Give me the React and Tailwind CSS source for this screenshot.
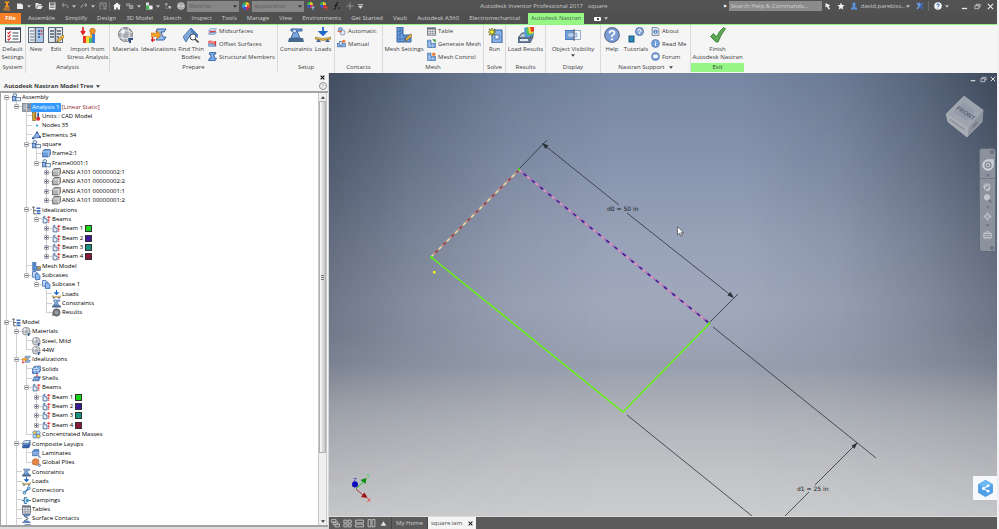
import React from 'react';

/* ---------- icon set ---------- */

const BLUE = '#3f6fb5';
const PALE = '#9cc0ea';

const SHAPES = {
  settings: (
    <>
      <rect x="0.5" y="1" width="15" height="14" fill="#fff" stroke="#3b4757" />
      <rect x="0" y="0.5" width="16" height="2.5" fill="#3b4757" />
      <path d="M7.5 6h6M7.5 9h6M7.5 12h6" stroke="#3b4757" strokeWidth="1.2" />
      <path d="M2.5 5.5l1.2 1.2 2-2.4M2.5 8.7l1.2 1.2 2-2.4M2.5 11.9l1.2 1.2 2-2.4" stroke="#d8262c" strokeWidth="1.1" fill="none" />
    </>
  ),
  newDoc: (
    <>
      <rect x="0.5" y="0.5" width="15" height="15" fill="#e8edf3" stroke="#5b6878" />
      <rect x="9" y="1" width="6" height="14" fill="#a9c6e8" />
      <path d="M7.5 1v14" stroke="#5b6878" strokeWidth="1.6" />
      <path d="M2 4h4M2 7h4M2 10h4M2 13h4" stroke="#6f7b8a" />
      <path d="M10 4h2M10 7h2M10 10h2" stroke="#1f4f97" strokeWidth="1.4" />
      <path d="M12.5 4h2M12.5 7h2" stroke="#d64040" strokeWidth="1.4" />
    </>
  ),
  editDoc: (
    <>
      <rect x="0.5" y="0.5" width="14" height="15" fill="#e3e7ec" stroke="#5b6878" />
      <path d="M7.5 1v14" stroke="#5b6878" strokeWidth="1.6" />
      <path d="M2 4h4M2 7h4M2 10h4M9 4h4M9 7h4M9 10h2" stroke="#56616f" strokeWidth="1.3" />
      <path d="M9 15l1-3 5-4 1.5 1.8-5 4.2z" fill="#f0b73a" stroke="#7a5715" strokeWidth="0.6" />
    </>
  ),
  stress: (
    <>
      <path d="M3 0v6M1 4l2 3 2-3" stroke="#e01f1f" strokeWidth="1.6" fill="none" />
      <path d="M3 9h7V6h5v10H3z" fill="#f7b52c" />
      <path d="M3 9h3v7H3z" fill="#e63a24" />
      <path d="M6 10h3v6H6z" fill="#f3dc3b" />
      <path d="M9 11h3v5H9z" fill="#48b761" />
      <path d="M12 7h3v9h-3z" fill="#3f7fd0" />
      <circle cx="12.5" cy="4" r="2.7" fill="#f59a23" stroke="#b4641a" strokeWidth="0.8" />
    </>
  ),
  sphere: (
    <>
      <circle cx="7.5" cy="7.5" r="7" fill="#a9adb3" stroke="#5d6168" strokeWidth="0.8" />
      <path d="M1 6c4-3 9-3 13 0M1 10c4 2 9 2 13 0M5 1c-2 4-1 9 1 13M10 1c2 4 2 9-1 13" stroke="#e9ebee" strokeWidth="1" fill="none" />
      <circle cx="5" cy="4.5" r="2.2" fill="#eef0f2" />
      <path d="M10 11h5v2h-2v3h-2z" fill="#31527f" />
    </>
  ),
  ideal: (
    <>
      <path d="M6 2h9l-2 3h-3l2 5h3l-2 3H5l2-3h2L7 5H5z" fill={PALE} stroke="#28569c" strokeWidth="0.9" />
      <path d="M0 6h6V3.5L10 8l-4 4V9.5H0z" fill="#f4a028" stroke="#c26a12" strokeWidth="0.5" />
      <path d="M1.5 10v5M0 13h4" stroke="#d8262c" strokeWidth="1.4" />
    </>
  ),
  thin: (
    <>
      <path d="M0 10l8-9 7 7-3 3-4-4-5 8z" fill="#7ea8dc" stroke="#3564a3" strokeWidth="0.8" />
      <path d="M8 1l7 7v3L8 5z" fill="#4b7fc2" />
      <circle cx="10" cy="10" r="3" fill="#fff" stroke="#4a4f57" strokeWidth="1" />
      <path d="M12 12l3.5 3.5" stroke="#4a4f57" strokeWidth="1.6" />
    </>
  ),
  midsurf: (
    <>
      <path d="M4 3h11l-3 4H1z" fill="#e7edf6" stroke="#5b86c4" strokeWidth="1.2" />
      <path d="M3 7h12l-3 3H1z" fill="#e5443c" />
      <path d="M3 10h12l-3 3H1z" fill="#b9d1ef" stroke="#5b86c4" strokeWidth="1.2" />
    </>
  ),
  offset: (
    <>
      <path d="M1 4q3-2 6 0t7 0v4q-4 2-7 0T1 8z" fill="#f08a86" stroke="#d33" strokeWidth="0.9" />
      <path d="M1 9q3-2 6 0t7 0v4H1z" fill="#8fb5e6" stroke="#3c6cb0" strokeWidth="0.9" />
      <path d="M13 4v8" stroke="#d8262c" strokeWidth="1.8" />
    </>
  ),
  beamI: (
    <path d="M3 1h11l-1 3h-3l2 7h3l-2 4H1l2-4h3L4 4H2z" fill="#7fb0ea" stroke="#1f4e96" strokeWidth="1.4" />
  ),
  constraint: (
    <>
      <path d="M3 2h11v2H9l3 7H3l3-7H3z" fill="#7ea8dc" stroke="#2c5a9c" strokeWidth="0.9" />
      <path d="M1 11h14l1 4H0z" fill="#47698f" />
      <circle cx="6.5" cy="4" r="2" fill="#cfe0f5" stroke="#2c5a9c" strokeWidth="0.8" />
    </>
  ),
  load: (
    <>
      <path d="M8 0v7M5 5l3 3 3-3z" fill="#1e66c9" stroke="#1e66c9" strokeWidth="1.8" />
      <path d="M0 10q8 3 16 0v2q-8 3-16 0z" fill="#e8b13a" stroke="#7b6327" strokeWidth="0.5" />
      <path d="M1 15l2.5-3L6 15zM10 15l2.5-3L15 15z" fill="#3d5f92" />
    </>
  ),
  auto: (
    <>
      <circle cx="6" cy="5" r="4" fill="#8fb5e6" stroke="#3c6cb0" />
      <circle cx="10" cy="10" r="4.5" fill="#dfe7f2" stroke="#4b6a98" />
      <path d="M1 8h7M5 6l3 2-3 2" stroke="#e0662a" strokeWidth="1.6" fill="none" />
    </>
  ),
  manual: (
    <>
      <rect x="1" y="8" width="14" height="6" fill="#8fb5e6" stroke="#2c5a9c" />
      <rect x="4" y="4" width="5" height="7" fill="#dfe7f2" stroke="#2c5a9c" />
      <circle cx="12" cy="4" r="2.8" fill="#f27a2b" />
    </>
  ),
  meshSet: (
    <>
      <path d="M1 0h6v8h8v7H1z" fill="#6d9fdc" stroke="#2c5a9c" strokeWidth="0.9" />
      <path d="M1 5l6-2M1 9l6-4M4 0v15M1 12h14M7 8l4 7M11 8l-4 7" stroke="#2c5a9c" strokeWidth="0.6" />
      <path d="M9 14l1-3 5-4 1.5 1.8-5 4z" fill="#f0b73a" stroke="#7a5715" strokeWidth="0.6" />
    </>
  ),
  meshGen: (
    <>
      <path d="M1 2h6v6h8v7H1z" fill="#6d9fdc" stroke="#24508f" />
      <path d="M4 2v13M1 8h6M1 12h14M10 8v7" stroke="#dbe9fa" strokeWidth="0.8" />
      <path d="M10 1h5v5z" fill="#3aa648" stroke="#3aa648" />
    </>
  ),
  meshCtl: (
    <>
      <path d="M1 2h6v6h8v7H1z" fill="#6d9fdc" stroke="#24508f" />
      <path d="M4 2v13M1 8h6M1 12h14M10 8v7" stroke="#dbe9fa" strokeWidth="0.8" />
      <circle cx="12" cy="4" r="3" fill="#f27a2b" />
    </>
  ),
  table: (
    <>
      <rect x="1" y="1.5" width="14" height="13" fill="#f3f4f6" stroke="#5b6068" strokeWidth="1.4" />
      <rect x="1" y="1.5" width="14" height="3" fill="#6c727c" />
      <path d="M5.5 2v12M10.5 2v12M1 8h14M1 11.3h14" stroke="#70767f" />
    </>
  ),
  run: (
    <>
      <path d="M8 3h7v13H5V8z" fill="#8ab2e6" stroke="#2c5a9c" />
      <rect x="8" y="8" width="4" height="4" fill="#e7f0fb" stroke="#2c5a9c" strokeWidth="0.7" />
      <path d="M5 1v8M1 5h8M2 2l6 6M8 2L2 8" stroke="#6f6f12" strokeWidth="1.2" />
      <circle cx="5" cy="5" r="1.8" fill="#f2ee3a" />
    </>
  ),
  results: (
    <>
      <path d="M0 11l4-5h11l-3 5z" fill="#b8c4d4" stroke="#3b4c63" />
      <path d="M0 11h12l3-5v4l-3 6H0z" fill="#6a7f9c" stroke="#3b4c63" strokeWidth="0.8" />
      <path d="M2 12h8v2H2z" fill="#e4eaf2" />
      <path d="M6 1q5-2 10 0v6q-4 4-9 3z" fill="#4c9be0" />
      <path d="M8 1q4-2 8 0v5q-3 3-7 2z" fill="#58c05b" />
      <path d="M10 0q3-1 6 0v5q-2 3-5 1z" fill="#f4d13a" />
      <path d="M12 0h4v4q-2 2-3 0z" fill="#e63a24" />
    </>
  ),
  visibility: (
    <>
      <rect x="0" y="3.5" width="9" height="9" fill="#6f9fdb" stroke="#3b68a8" strokeWidth="0.8" />
      <rect x="9" y="3.5" width="6.5" height="9" fill="#f7f9fc" stroke="#7a96bd" strokeWidth="0.8" />
      <rect x="3" y="6" width="9" height="4" fill="#b9d1ef" stroke="#7a96bd" strokeWidth="0.6" />
      <path d="M9 2v12" stroke="#5b6068" strokeWidth="1" />
    </>
  ),
  help: (
    <>
      <circle cx="8" cy="8" r="7.3" fill="#7d9fd6" stroke="#5a6f92" strokeWidth="1.2" />
      <path d="M5.5 6.2q0-2.5 2.500-2.500t2.500 2.300q0 1.500-2.500 2.500v1.500" stroke="#fff" strokeWidth="1.6" fill="none" />
      <circle cx="8" cy="12.2" r="1" fill="#fff" />
    </>
  ),
  tutorials: (
    <>
      <circle cx="11.5" cy="4.5" r="4" fill="#8fabda" stroke="#5773a4" />
      <path d="M10 3.8q0-1.500 1.500-1.500t1.500 1.500q0 .8-1.500 1.400v1.300" stroke="#fff" fill="none" />
      <rect x="1" y="9" width="5" height="6" fill="#2b87b8" stroke="#195f85" />
    </>
  ),
  about: (
    <>
      <path d="M2 1h9l3 3v11H2z" fill="#e6ebf2" stroke="#56657c" strokeWidth="1.3" />
      <circle cx="8" cy="8.5" r="4" fill="#5f87c6" />
      <path d="M8 8v3M8 6v1" stroke="#fff" strokeWidth="1.4" />
    </>
  ),
  info: (
    <>
      <circle cx="8" cy="8" r="7" fill="#7aa2dc" stroke="#4f6fa5" strokeWidth="1.2" />
      <path d="M8 7v5M8 4v1.6" stroke="#fff" strokeWidth="1.8" />
    </>
  ),
  forum: (
    <>
      <circle cx="8" cy="8" r="7" fill="#7aa2dc" stroke="#4f6fa5" strokeWidth="1.2" />
      <path d="M4 5h8v5H8l-2 2v-2H4z" fill="#fff" />
    </>
  ),
  check: (
    <path d="M0.5 9.5L3.5 6.500l3 3.500Q9 4 13.500 0.500l2 1.200Q10.500 8 8 15H6z" fill="#5cab50" stroke="#2f6e2b" strokeWidth="0.8" />
  ),
  assembly: (
    <>
      <path d="M2 6V2q3-2 6 0v4" fill="#dfe9f5" stroke="#30568c" strokeWidth="1.2" />
      <rect x="1" y="6" width="6" height="8" fill="#8db4e6" stroke="#30568c" strokeWidth="1.2" />
      <rect x="7" y="8" width="8" height="6" fill="#eef3f9" stroke="#30568c" strokeWidth="1.2" />
    </>
  ),
  analysis: (
    <>
      <rect x="1" y="1" width="14" height="14" fill="#9aa1ab" stroke="#5d6470" />
      <path d="M8 1v14M3 4h3M3 7h3M3 10h3" stroke="#dfe3e8" strokeWidth="1.3" />
      <path d="M10 4h4M10 8h4" stroke="#2e5fa8" strokeWidth="2" />
    </>
  ),
  units: (
    <>
      <rect x="1" y="1" width="6" height="14" fill="#d9a93a" stroke="#6b5218" />
      <path d="M4 4h3M4 7h3M4 10h3" stroke="#4f3b0d" />
      <path d="M11 1v9" stroke="#1c4fa0" strokeWidth="3" />
      <circle cx="11" cy="12" r="3.5" fill="#d8262c" />
    </>
  ),
  node: <circle cx="9" cy="8" r="2" fill="#2f9be8" />,
  elements: (
    <>
      <path d="M1 13L9 2l6 9z" fill="#8fb5e6" stroke="#2c5a9c" strokeWidth="1.3" />
      <circle cx="9" cy="3" r="2" fill="#2c5a9c" /><circle cx="2" cy="13" r="2" fill="#2c5a9c" /><circle cx="14" cy="11" r="2" fill="#2c5a9c" />
    </>
  ),
  partBlue: (
    <>
      <path d="M1 5l3-4h11v9l-3 4H1z" fill="#6f9fdb" stroke="#234f90" strokeWidth="1.2" />
      <path d="M1 5h11v9M12 5l3-4" stroke="#dce9f8" strokeWidth="1.2" fill="none" />
    </>
  ),
  partGray: (
    <>
      <path d="M1 5l3-4h11v9l-3 4H1z" fill="#b4b4b4" stroke="#555" strokeWidth="1.4" />
      <path d="M1 5h11v9M12 5l3-4" stroke="#f0f0f0" strokeWidth="1.2" fill="none" />
    </>
  ),
  treeList: (
    <>
      <path d="M0 2h5M3 2v12h4M3 8h4" stroke="#444" strokeWidth="1.4" fill="none" />
      <path d="M8 4h7M8 8.5h7M8 13h7" stroke={BLUE} strokeWidth="3" />
    </>
  ),
  beam: (
    <>
      <path d="M2 14V6q0-4 3-4v5h4v7z" fill="#eef3f9" stroke="#3a5f94" strokeWidth="1.5" />
      <path d="M12 2v12" stroke="#d8262c" strokeWidth="2" strokeDasharray="4 1.5" />
      <path d="M9 4h6" stroke="#d8262c" strokeWidth="1.5" />
    </>
  ),
  subcase: (
    <>
      <path d="M1 1h6l3 3v7H1z" fill="#cfe0f5" stroke="#2c62b0" strokeWidth="1.4" />
      <path d="M6 5h5l3 3v7H6z" fill="#8fb8ee" stroke="#2c62b0" strokeWidth="1.4" />
    </>
  ),
  blob: (
    <>
      <circle cx="8" cy="8" r="6.5" fill="#777b80" stroke="#4a4d51" />
      <circle cx="8" cy="8" r="3" fill="#9da1a6" />
      <path d="M1 15V8l3 3z" fill="#4a4d51" />
    </>
  ),
  solids: (
    <>
      <path d="M1 6l4-4h10v8l-4 5H1z" fill="#5e93da" stroke="#1c458a" strokeWidth="1.2" />
      <path d="M1 10h10M5 6v9M11 6v9M1 6h10l4-4M8 2v4M11 10l4-4" stroke="#fff" strokeWidth="1" fill="none" />
    </>
  ),
  shells: (
    <>
      <path d="M1 12l3-7h11l-3 7z" fill="#3f72bd" stroke="#1c458a" />
      <path d="M6 5l-2 7M10 5l-2 7M2.5 8.5h11" stroke="#c9dcf5" />
      <path d="M9 0v5" stroke="#d8262c" strokeWidth="1.8" />
    </>
  ),
  masses: (
    <>
      <circle cx="5" cy="5" r="3.6" fill="#f6d24c" stroke="#3f6fb5" strokeWidth="1.2" />
      <circle cx="11" cy="5" r="3.6" fill="#bcd5f2" stroke="#3f6fb5" strokeWidth="1.2" />
      <circle cx="5" cy="11" r="3.6" fill="#bcd5f2" stroke="#3f6fb5" strokeWidth="1.2" />
      <circle cx="11" cy="11" r="3.6" fill="#f6d24c" stroke="#3f6fb5" strokeWidth="1.2" />
    </>
  ),
  layup: (
    <>
      <path d="M1 11l4-4h10l-3 7H1z" fill="#3a6ab0" stroke="#1d4179" />
      <path d="M1 8l4-4h10l-3 5H1z" fill="#7aa8e0" stroke="#1d4179" />
      <path d="M1 5l4-4h10l-3 5H1z" fill="#dce9f8" stroke="#1d4179" />
    </>
  ),
  laminate: (
    <>
      <path d="M1 4l3-3h8v8l-3 3H1z" fill="#5e93da" stroke="#1c458a" />
      <path d="M1 6.5h11M1 9h10" stroke="#dce9f8" />
      <path d="M12 10v4.5h3.5" stroke="#1c458a" strokeWidth="1.3" fill="none" />
    </>
  ),
  plies: (
    <>
      <path d="M1 4l4-3 7 2v7l-4 3-7-2z" fill="#e98449" stroke="#a34e1c" />
      <circle cx="13" cy="13" r="2" fill="#fff" stroke="#1c458a" strokeWidth="1.3" />
    </>
  ),
  connector: (
    <>
      <path d="M4 12l8-8" stroke="#2c6fae" strokeWidth="2.4" />
      <circle cx="4" cy="12" r="2.6" fill="#9fd0ee" stroke="#1f5a94" />
      <circle cx="12" cy="4" r="2.6" fill="#9fd0ee" stroke="#1f5a94" />
    </>
  ),
  damping: (
    <>
      <path d="M0 8h4M12 8h4" stroke="#1f5a94" strokeWidth="1.6" />
      <path d="M9 3H4v10h5" fill="#d5e7f5" stroke="#1f5a94" strokeWidth="1.6" />
      <rect x="7" y="5" width="5" height="6" fill="#3fa0c4" />
    </>
  ),
  contact: (
    <>
      <path d="M1 1h14q-7 6-14 0z" fill="#5e93da" stroke="#1c458a" />
      <path d="M4 4l7 4-7 4" fill="none" stroke="#3b4757" strokeWidth="1.6" />
      <path d="M1 15h14q-7-6-14 0z" fill="#5e93da" stroke="#1c458a" />
    </>
  ),
  page: <path d="M2 3h8l4 3v8H2z" fill="#e9e9e9" />,
  folder: (
    <>
      <path d="M1 2h5l2 2h5v3H5l-3 6H1z" fill="#e4e4e4" />
      <path d="M6 8h10l-4 6H3z" fill="#e4e4e4" />
    </>
  ),
  save: (
    <>
      <rect x="2" y="1" width="13" height="14" fill="#e9e9e9" />
      <rect x="4" y="2" width="9" height="5" fill="#777" /><rect x="4" y="9" width="9" height="3" fill="#8a8a8a" />
    </>
  ),
  undo: <path d="M6 2L2 6l4 4M2 6h7q5 0 5 6" fill="none" stroke="#9a9a9a" strokeWidth="2" />,
  redo: <path d="M10 2l4 4-4 4M14 6H7q-5 0-5 6" fill="none" stroke="#9a9a9a" strokeWidth="2" />,
  pick: <path d="M2 2h12v12H9M2 2v12h3M5 6h5v8" fill="none" stroke="#a5a5a5" strokeWidth="1.6" />,
  home: <path d="M8 1l8 7h-2v7H9.500v-4h-3v4H2V8H0z" fill="#f4f4f4" />,
  cubes: (
    <>
      <path d="M1 3h7v5H1z" fill="#777" stroke="#aaa" /><path d="M7 7h7v6H7z" fill="#8a8a8a" stroke="#c4c4c4" />
    </>
  ),
  green: (
    <>
      <path d="M2 1h6v6h7v8H2z" fill="#d8dde2" />
      <rect x="2" y="7" width="6" height="8" fill="#46b34e" /><circle cx="12" cy="11" r="3" fill="#f0f0f0" />
    </>
  ),
  dots: (
    <>
      <rect x="2" y="2" width="5" height="5" fill="#999" /><rect x="9" y="8" width="5" height="5" fill="#bdbdbd" /><path d="M4 9v4h3" stroke="#aaa" fill="none" />
    </>
  ),
  gsphere: (
    <>
      <circle cx="8" cy="8" r="7.5" fill="#c9c9c9" /><path d="M2 5q6-3 12 0M2 11q6 3 12 0M8 1v14" stroke="#777" fill="none" />
    </>
  ),
  wheel: (
    <>
      <path d="M8 8L8 0A8 8 0 0 1 15 4z" fill="#e9c92b" /><path d="M8 8l7-4A8 8 0 0 1 15 12z" fill="#e8502a" />
      <path d="M8 8l7 4A8 8 0 0 1 8 16z" fill="#c92a5b" /><path d="M8 8v8A8 8 0 0 1 1 12z" fill="#3a4fd0" />
      <path d="M8 8l-7 4A8 8 0 0 1 1 4z" fill="#2f9be8" /><path d="M8 8L1 4A8 8 0 0 1 8 0z" fill="#3fb54a" />
      <circle cx="8" cy="8" r="2" fill="#f5f5f5" />
    </>
  ),
  wheelUp: (
    <>
      <circle cx="6" cy="6" r="6" fill="#3fb54a" /><path d="M6 6V0a6 6 0 0 1 6 6z" fill="#e9c92b" /><path d="M6 6h6a6 6 0 0 1-6 6z" fill="#c92a5b" />
      <path d="M6 6v6a6 6 0 0 1-6-6z" fill="#3a4fd0" /><path d="M12 16V9M9 12l3-3 3 3" stroke="#9cc4f5" strokeWidth="2" />
    </>
  ),
  wheelOff: (
    <>
      <circle cx="6" cy="6" r="6" fill="#3fb54a" /><path d="M6 6V0a6 6 0 0 1 6 6z" fill="#e9c92b" /><path d="M6 6h6a6 6 0 0 1-6 6z" fill="#c92a5b" />
      <path d="M6 6v6a6 6 0 0 1-6-6z" fill="#3a4fd0" /><path d="M9 9l6 6M15 9l-6 6" stroke="#f03a2a" strokeWidth="2.4" />
    </>
  ),
  fx: <path d="M11 1q-4-1-5 5l-1 7q-1 2-4 1M3 7h6M11 13l2-2M11 11l2 2" fill="none" stroke="#151515" strokeWidth="2" />,
  plus: <path d="M8 1v14M1 8h14" stroke="#8e8e8e" strokeWidth="2.4" />,
  menu: <path d="M2 2h12v2H2zM2 6h12l-6 7z" fill="#d8d8d8" />,
  dish: <path d="M3 2l10 5-4 1 3 6-3 1-3-6-3 2z" fill="#f2f2f2" />,
  star: <path d="M8 1l2.2 4.8 5 .5-3.800 3.500 1.200 5.200L8 12.300 3.400 15l1.200-5.200L.8 6.300l5-.5z" fill="#f2f2f2" />,
  user: <path d="M8 1a3.5 3.5 0 0 1 2 6.300V10l4 1.500V15H2v-3.500L6 10V7.300A3.500 3.500 0 0 1 8 1z" fill="#5b8fe0" />,
  exchange: (
    <>
      <path d="M2 2l5 6-5 6M6 2l3 4" fill="none" stroke="#6ea2ee" strokeWidth="2.6" /><path d="M14 2L9 8l5 6" fill="none" stroke="#3a6fd8" strokeWidth="2.6" />
    </>
  ),
  qmark: (
    <>
      <circle cx="8" cy="8" r="7.5" fill="#f4f6fa" /><path d="M5.5 6q0-2.300 2.500-2.300T10.500 6q0 1.300-2.500 2.300V10M8 11.500v1.600" fill="none" stroke="#2c5aa8" strokeWidth="1.9" />
    </>
  ),
  min: <path d="M2 11h12v3H2z" fill="#e8e8e8" />,
  restore: <path d="M5 6V3h9v6h-3M2 6h9v7H2z" fill="none" stroke="#e8e8e8" strokeWidth="1.5" />,
  close: <path d="M2 2l12 12M14 2L2 14" stroke="#ededed" strokeWidth="2.4" />,
  cascade: <path d="M1 1h8v5H1zM4 5h8v5H4zM7 9h8v5H7z" fill="#5b5b5b" stroke="#c9c9c9" strokeWidth="1.4" />,
  grid4: <path d="M1.5 2h5.500v5H1.500zM9 2h5.500v5H9zM1.500 9h5.500v5H1.500zM9 9h5.500v5H9z" fill="none" stroke="#c9c9c9" strokeWidth="1.5" />,
  rows: <path d="M1 2h14v5H1zM1 9h14v5H1z" fill="none" stroke="#c9c9c9" strokeWidth="1.5" />,
  cols: <path d="M2 1h5v13H2zM9 1h5v13H9z" fill="none" stroke="#c9c9c9" strokeWidth="1.5" />,
  up: <path d="M3 12h10L8 4z" fill="#e4e4e4" />,
};

function Icon({ name, className = 'size-[9px]' }) {
  return (
    <svg viewBox="0 0 16 16" className={`shrink-0 ${className}`} fill="none" aria-hidden="true">
      {SHAPES[name]}
    </svg>
  );
}

function Caret({ className = 'text-[#c4c4c4]' }) {
  return (
    <svg viewBox="0 0 6 4" className={`h-[3px] w-[4px] shrink-0 ${className}`} aria-hidden="true">
      <path d="M0 0h6L3 4z" fill="currentColor" />
    </svg>
  );
}

/* ---------- title bar ---------- */

function BarButton({ icon, label, size = 'size-[8px]' }) {
  return (
    <button aria-label={label} className="flex w-[13px] shrink-0 items-center justify-center">
      <Icon name={icon} className={size} />
    </button>
  );
}

function BarCaret({ label }) {
  return (
    <button aria-label={label} className="flex w-[6px] shrink-0 justify-center"><Caret /></button>
  );
}

function BarSelect({ label }) {
  return (
    <div className="relative flex h-[11px] w-[52px] shrink-0 items-center bg-[#868686]">
      <select aria-label={label} className="h-full w-full appearance-none bg-transparent px-[2px] text-[6px] leading-[11px] text-[#626262] italic">
        <option>{label}</option>
      </select>
      <span className="pointer-events-none absolute right-[2px] flex"><Caret className="text-[#333]" /></span>
    </div>
  );
}

function TitleBar() {
  return (
    <header className="flex h-[12px] items-center bg-[#525252] text-[#c9c9c9]">
      <div className="flex h-full items-center">
        <button aria-label="Inventor menu" className="flex h-full w-[13px] flex-col items-center pt-px">
          <svg viewBox="0 0 8 8" className="h-[7px] w-[6px]"><path d="M1 0h6v2H5.300v4H7v2H1V6h1.700V2H1z" fill="#f7941e" /></svg>
          <span className="text-[3px] leading-[4px] font-bold text-[#f7941e]">PRO</span>
        </button>
        <BarButton icon="page" label="New file" />
        <BarCaret label="New file options" />
        <BarButton icon="folder" label="Open" />
        <BarButton icon="save" label="Save" />
        <BarButton icon="undo" label="Undo" />
        <BarCaret label="Undo history" />
        <BarButton icon="redo" label="Redo" />
        <BarCaret label="Redo history" />
        <BarButton icon="pick" label="Select" />
        <span className="h-[10px] w-px bg-[#6b6b6b]" />
        <BarButton icon="home" label="Home" />
        <BarButton icon="cubes" label="Return" />
        <BarCaret label="Return options" />
        <BarButton icon="green" label="Update" />
        <BarCaret label="Update options" />
        <BarButton icon="dots" label="Select filter" />
        <BarButton icon="gsphere" label="Materials" />
        <BarSelect label="Material" />
        <BarButton icon="wheel" label="Appearances" />
        <BarSelect label="Appearance" />
        <BarButton icon="wheelUp" label="Adjust" />
        <BarButton icon="wheelOff" label="Clear" />
        <BarButton icon="fx" label="Parameters" />
        <BarButton icon="plus" label="Add" />
        <button aria-label="Customize" className="flex w-[8px] shrink-0 justify-center"><Icon name="menu" className="size-[7px]" /></button>
      </div>
      <h1 className="flex flex-1 justify-center gap-[5px] text-[6px] leading-[12px] whitespace-nowrap">
        <span>Autodesk Inventor Professional 2017</span>
        <span>square</span>
      </h1>
      <div className="flex h-full items-center">
        <span className="w-[5px] text-[4px] text-white">▶</span>
        <input
          aria-label="Search Help and Commands"
          placeholder="Search Help & Commands..."
          className="h-[10px] w-[93px] bg-[#8b8b8b] px-[2px] text-[6px] leading-[10px] placeholder:text-[#d2d2d2]"
        />
        <BarButton icon="dish" label="Communication center" />
        <BarButton icon="star" label="Favorites" />
        <BarButton icon="user" label="Account" />
        <button className="flex items-center text-[6px] leading-[12px]">david.parebiss...<Caret /></button>
        <span className="w-[3px]" />
        <BarButton icon="exchange" label="Exchange apps" />
        <span className="mx-[2px] h-[10px] w-px bg-[#6b6b6b]" />
        <BarButton icon="qmark" label="Help" />
        <BarCaret label="Help options" />
        <span className="w-[8px]" />
        <BarButton icon="min" label="Minimize" size="size-[7px]" />
        <BarButton icon="restore" label="Restore" size="size-[7px]" />
        <BarButton icon="close" label="Close" size="size-[7px]" />
      </div>
    </header>
  );
}

/* ---------- ribbon ---------- */

const TABS = [
  'Assemble', 'Simplify', 'Design', '3D Model', 'Sketch', 'Inspect', 'Tools', 'Manage', 'View',
  'Environments', 'Get Started', 'Vault', 'Autodesk A360', 'Electromechanical',
];

function TabRow() {
  return (
    <nav className="flex h-[13px] items-end border-b border-[#94f283] bg-[#505050] text-[6px] leading-[11px] whitespace-nowrap text-[#cfcfcf]">
      <button className="w-[21px] bg-[#f58025] font-bold text-white">File</button>
      <span className="w-[2px]" />
      {TABS.map((t) => <button key={t} className="px-[5px]">{t}</button>)}
      <button className="ml-[3px] w-[56px] bg-[#96f786] text-[#48664a]">Autodesk Nastran</button>
      <button aria-label="Ribbon display" className="ml-[10px] flex h-[11px] items-center gap-[3px]">
        <span className="flex h-[4px] w-[7px] items-center justify-center rounded-[1px] bg-white"><span className="size-[2px] bg-[#444]" /></span>
        <Caret />
      </button>
    </nav>
  );
}

function Panel({ label, width, caret, exit, children }) {
  return (
    <section className={`flex shrink-0 flex-col ${width} ${exit ? '' : 'border-r border-[#d9d9d9]'}`}>
      <div className="flex h-[38px]">{children}</div>
      <div className={`flex h-[9px] items-center justify-center gap-[4px] leading-[9px] ${exit ? 'bg-[#96f786]' : ''}`}>
        {label}
        {caret && <Caret className="text-[#444]" />}
      </div>
    </section>
  );
}

function Big({ icon, lines, width = 'flex-1', caret }) {
  return (
    <button className={`flex shrink-0 flex-col items-center pt-[2px] leading-[8px] ${width}`}>
      <Icon name={icon} className="mb-[2px] size-[16px]" />
      {lines.map((l) => <span key={l}>{l}</span>)}
      {caret && <span className="flex pt-px"><Caret className="text-[#444]" /></span>}
    </button>
  );
}

function SmallColumn({ items }) {
  return (
    <div className="grid grid-rows-3 pl-[2px]">
      {items.map(([icon, text]) => (
        <button key={text} className="flex items-center gap-[2px] leading-[8px]">
          <Icon name={icon} />
          {text}
        </button>
      ))}
    </div>
  );
}

function Ribbon() {
  return (
    <div className="flex h-[48px] bg-[#f5f5f5] text-[6px] whitespace-nowrap text-[#3c3c3c]">
      <Panel label="System" width="w-[26px]">
        <Big icon="settings" lines={['Default', 'Settings']} />
      </Panel>
      <Panel label="Analysis" width="w-[84px]">
        <Big icon="newDoc" lines={['New']} width="w-[20px]" />
        <Big icon="editDoc" lines={['Edit']} width="w-[20px]" />
        <Big icon="stress" lines={['Import from', 'Stress Analysis']} />
      </Panel>
      <Panel label="Prepare" width="w-[168px]">
        <Big icon="sphere" lines={['Materials']} width="w-[31px]" />
        <Big icon="ideal" lines={['Idealizations']} width="w-[35px]" />
        <Big icon="thin" lines={['Find Thin', 'Bodies']} width="w-[30px]" />
        <SmallColumn items={[['midsurf', 'Midsurfaces'], ['offset', 'Offset Surfaces'], ['beamI', 'Structural Members']]} />
      </Panel>
      <Panel label="Setup" width="w-[57px]">
        <Big icon="constraint" lines={['Constraints']} width="w-[36px]" />
        <Big icon="load" lines={['Loads']} width="w-[18px]" />
      </Panel>
      <Panel label="Contacts" width="w-[48px]">
        <SmallColumn items={[['auto', 'Automatic'], ['manual', 'Manual']]} />
      </Panel>
      <Panel label="Mesh" width="w-[101px]">
        <Big icon="meshSet" lines={['Mesh Settings']} width="w-[42px]" />
        <SmallColumn items={[['table', 'Table'], ['meshGen', 'Generate Mesh'], ['meshCtl', 'Mesh Control']]} />
      </Panel>
      <Panel label="Solve" width="w-[22px]">
        <Big icon="run" lines={['Run']} />
      </Panel>
      <Panel label="Results" width="w-[40px]">
        <Big icon="results" lines={['Load Results']} />
      </Panel>
      <Panel label="Display" width="w-[55px]">
        <Big icon="visibility" lines={['Object Visibility']} caret />
      </Panel>
      <Panel label="Nastran Support" width="w-[90px]" caret>
        <Big icon="help" lines={['Help']} width="w-[22px]" />
        <Big icon="tutorials" lines={['Tutorials']} width="w-[26px]" />
        <SmallColumn items={[['about', 'About'], ['info', 'Read Me'], ['forum', 'Forum']]} />
      </Panel>
      <Panel label="Exit" width="w-[53px]" exit>
        <Big icon="check" lines={['Finish', 'Autodesk Nastran']} />
      </Panel>
    </div>
  );
}

/* ---------- model tree ---------- */

// [level, icon, label, expander, swatch]
const ROWS = [
  [0, 'assembly', 'Assembly', '-'],
  [1, 'analysis', 'Analysis 1', '-'],
  [2, 'units', 'Units : CAD Model'],
  [2, 'node', 'Nodes 35'],
  [2, 'elements', 'Elements 34'],
  [2, 'assembly', 'square', '-'],
  [3, 'partBlue', 'frame2:1'],
  [3, 'assembly', 'Frame0001:1', '-'],
  [4, 'partGray', 'ANSI A101 00000002:1', '+'],
  [4, 'partGray', 'ANSI A101 00000002:2', '+'],
  [4, 'partGray', 'ANSI A101 00000001:1', '+'],
  [4, 'partGray', 'ANSI A101 00000001:2', '+'],
  [2, 'treeList', 'Idealizations', '-'],
  [3, 'beam', 'Beams', '-'],
  [4, 'beam', 'Beam 1', '+', 'bg-[#17d317]'],
  [4, 'beam', 'Beam 2', '+', 'bg-[#3a1896]'],
  [4, 'beam', 'Beam 3', '+', 'bg-[#17917f]'],
  [4, 'beam', 'Beam 4', '+', 'bg-[#861a38]'],
  [2, 'meshSet', 'Mesh Model'],
  [2, 'subcase', 'Subcases', '-'],
  [3, 'subcase', 'Subcase 1', '-'],
  [4, 'load', 'Loads'],
  [4, 'constraint', 'Constraints'],
  [4, 'blob', 'Results'],
  [0, 'treeList', 'Model', '-'],
  [1, 'sphere', 'Materials', '-'],
  [2, 'sphere', 'Steel, Mild'],
  [2, 'sphere', '44W'],
  [1, 'ideal', 'Idealizations', '-'],
  [2, 'solids', 'Solids'],
  [2, 'shells', 'Shells'],
  [2, 'beam', 'Beams', '-'],
  [3, 'beam', 'Beam 1', '+', 'bg-[#17d317]'],
  [3, 'beam', 'Beam 2', '+', 'bg-[#3a1896]'],
  [3, 'beam', 'Beam 3', '+', 'bg-[#17917f]'],
  [3, 'beam', 'Beam 4', '+', 'bg-[#861a38]'],
  [2, 'masses', 'Concentrated Masses'],
  [1, 'layup', 'Composite Layups', '-'],
  [2, 'laminate', 'Laminates'],
  [2, 'plies', 'Global Plies'],
  [1, 'constraint', 'Constraints'],
  [1, 'load', 'Loads'],
  [1, 'connector', 'Connectors'],
  [1, 'damping', 'Dampings'],
  [1, 'table', 'Tables'],
  [1, 'contact', 'Surface Contacts'],
  [1, 'layup', 'Plot Templates'],
];

// The list goes on below the last visible row, so the model's own guides run to its end.
function continues(index, level) {
  for (let i = index + 1; i < ROWS.length; i += 1) {
    if (ROWS[i][0] === level) return true;
    if (ROWS[i][0] < level) return false;
  }
  return level <= 1;
}

function Guide({ index, level }) {
  const own = ROWS[index][0] === level;
  const more = continues(index, level);
  const sign = ROWS[index][3];
  if (!own) {
    return (
      <span className="flex w-[10px] shrink-0">
        <span className={`w-[5px] border-r ${more ? 'border-[#d0d0d0]' : 'border-transparent'}`} />
      </span>
    );
  }
  return (
    <span className="relative flex w-[10px] shrink-0">
      <span className="grid w-[5px] grid-rows-2">
        <span className={`border-r ${index > 0 ? 'border-[#d0d0d0]' : 'border-transparent'}`} />
        <span className={`border-r ${more ? 'border-[#d0d0d0]' : 'border-transparent'}`} />
      </span>
      <span className="grid w-[5px] grid-rows-2">
        <span className="border-b border-[#d0d0d0]" />
        <span />
      </span>
      {sign && (
        <button
          aria-label={sign === '-' ? `Collapse ${ROWS[index][2]}` : `Expand ${ROWS[index][2]}`}
          className="absolute top-[2px] left-[2px] flex size-[5px] items-center justify-center rounded-[1px] border border-[#b0b0b0] bg-[#f4f4f4]"
        >
          <span className="h-px w-[3px] shrink-0 bg-[#64708a]" />
          {sign === '+' && <span className="absolute h-[3px] w-px bg-[#64708a]" />}
        </button>
      )}
    </span>
  );
}

function TreeRow({ row, index }) {
  const [level, icon, label, , swatch] = row;
  const selected = index === 1;
  return (
    <li className="flex min-h-0">
      {Array.from({ length: level + 1 }, (_, l) => <Guide key={l} index={index} level={l} />)}
      <span className="flex items-center">
        <Icon name={icon} />
        <span className={`px-px leading-[9px] ${selected ? 'bg-[#3399ff] text-white' : ''}`}>{label}</span>
        {selected && <span className="ml-px text-[#8a2a2a]">[Linear Static]</span>}
        {swatch && <span className={`ml-px size-[7px] border border-[#333] ${swatch}`} />}
      </span>
    </li>
  );
}

function ModelTree() {
  return (
    <aside className="flex w-[328px] shrink-0 flex-col bg-[#ececec] text-[6px] whitespace-nowrap text-black">
      <div className="flex h-[18px] justify-between bg-[#f5f5f5] pl-[4px]">
        <h2 className="flex items-end gap-[3px] text-[6px] leading-[9px] font-bold text-[#3d3d3d]">
          Autodesk Nastran Model Tree
          <span className="flex h-[9px] items-center"><Caret className="text-[#333]" /></span>
        </h2>
        <div className="flex w-[11px] flex-col items-center">
          <button aria-label="Close panel" className="flex h-[9px] items-center">
            <svg viewBox="0 0 8 8" className="size-[5px]"><path d="M1 1l6 6M7 1L1 7" stroke="#111" strokeWidth="2" /></svg>
          </button>
          <button aria-label="Panel help" className="size-[8px] rounded-full border border-[#8d8d8d] text-[5px] leading-[6px] text-[#777]">?</button>
        </div>
      </div>
      <div className="flex min-h-0 flex-1 border-y-2 border-l border-[#a3a3a3] bg-white">
        <div className="min-w-0 flex-1 overflow-hidden pl-px">
          <ul className="grid h-[440px] auto-rows-fr">
            {ROWS.map((r, i) => <TreeRow key={i} row={r} index={i} />)}
          </ul>
        </div>
        <div className="flex w-[9px] flex-col border-x border-[#c9c9c9] bg-[#efefef]">
          <button aria-label="Scroll up" className="flex h-[8px] items-center justify-center"><Caret className="rotate-180 text-[#333]" /></button>
          <div className="flex flex-[11] flex-col items-center justify-center gap-px border border-[#b0b0b0] bg-linear-to-r from-[#fafafa] to-[#c4c4c4]">
            <span className="h-px w-[3px] bg-[#777]" />
            <span className="h-px w-[3px] bg-[#777]" />
            <span className="h-px w-[3px] bg-[#777]" />
          </div>
          <div className="flex-[2]" />
          <button aria-label="Scroll down" className="flex h-[8px] items-center justify-center"><Caret className="text-[#333]" /></button>
        </div>
        <div className="w-px bg-[#f5f5f5]" />
      </div>
      <div className="h-[2px] bg-[#dcdcdc]" />
    </aside>
  );
}

/* ---------- model view ---------- */

function Sketch() {
  return (
    <svg viewBox="329 73 668 443" preserveAspectRatio="xMinYMin slice" className="relative block h-full w-full" fill="none">
      <g stroke="#2b3138" strokeWidth="0.8">
        <path d="M519 169L547 140M543 144L619 205M627 213L733 297M710 322L738 294" />
        <path d="M713 327L876 458M627 415L752 516M857 443L815 485M809 492L785 516" />
      </g>
      <g fill="#2b3138">
        <path d="M542 143l6.500 2.600-3 3.500zM734 298l-6.500-2.600 3-3.500zM857.500 442.500l-6 3.200 3 3z" />
      </g>
      <path d="M431 257L623 412L709 324" stroke="#66f312" strokeWidth="1.5" />
      <path d="M431 257L519 170" stroke="#cf9a80" strokeWidth="1.6" />
      <path d="M431 257L519 170" stroke="#e0deb4" strokeWidth="1.6" strokeDasharray="3 8.4" />
      <path d="M431 257L519 170" stroke="#93384a" strokeWidth="1.6" strokeDasharray="3.5 7.9" strokeDashoffset="-6" />
      <path d="M519 170L709 323" stroke="#a873b8" strokeWidth="1.8" />
      <path d="M519 170L709 323" stroke="#dc9cbc" strokeWidth="1.8" strokeDasharray="3 7.6" />
      <path d="M519 170L709 323" stroke="#4a2299" strokeWidth="1.8" strokeDasharray="3.6 7" strokeDashoffset="-6" />
      <g fill="#4fe010">
        <circle cx="431.5" cy="257.5" r="1.6" /><circle cx="519" cy="169.5" r="1.2" /><circle cx="709" cy="323.5" r="1.2" />
      </g>
      <rect x="433" y="271" width="2.5" height="2.5" fill="#f6f01c" />
      <g fill="#15181c" className="font-['DejaVu_Sans',sans-serif] text-[6px]">
        <text x="607" y="211">d0 = 50 in</text>
        <text x="797" y="491">d1 = 25 in</text>
      </g>
      <path d="M677.5 226.5v8.500l2-1.800 1.400 3.100 1.400-.6-1.400-3h2.800z" fill="#fff" stroke="#444" strokeWidth="0.7" />

      <path d="M356 489L363 482" stroke="#22c222" />
      <path d="M356 489L363 495" stroke="#b03030" />
      <path d="M366.5 478l-1 6-5-4z" fill="#0c8c0c" />
      <path d="M367.5 498l-6.500-1 3.500-4.500z" fill="#a01212" />
      <circle cx="355" cy="484.5" r="3" fill="#0a0ab8" />
      <g className="font-['Liberation_Sans',sans-serif] text-[6px]">
        <text x="353" y="482" fill="#2828d8">Z</text>
        <text x="366" y="478" fill="#25e025">Y</text>
        <text x="367" y="502" fill="#f01c1c">X</text>
      </g>

      <path d="M964 96L983 110L968 128L946 114z" fill="#9ea4ae" stroke="#b3b8c0" strokeWidth="0.5" />
      <path d="M963 102L975 111L967 121L953 112z" fill="#939bab" />
      <path d="M983 110L968 128L967 137L982 122z" fill="#8e949f" stroke="#b3b8c0" strokeWidth="0.5" />
      <path d="M946 114L968 128L967 137L948 122z" fill="#a9aeb6" stroke="#b9bdc4" strokeWidth="0.5" />
      <text x="956" y="109" fill="#5d6573" transform="rotate(34 956 109)" className="font-['Liberation_Sans',sans-serif] text-[6px] font-bold">FRONT</text>
      <path d="M950 119.5l15 10.500" stroke="#7a808b" strokeDasharray="1.5 0.8" strokeWidth="1.4" />
      <path d="M973 127l4-5" stroke="#6c7380" strokeDasharray="1.5 0.8" strokeWidth="2.4" />
    </svg>
  );
}

function NavButton({ label, children }) {
  return (
    <button aria-label={label} className="flex h-[12px] items-center justify-center">
      <svg viewBox="0 0 16 16" className="size-[9px]" fill="none" stroke="#c6cad0" strokeWidth="1.8">{children}</svg>
    </button>
  );
}

function NavCaret() {
  return <span className="flex h-[6px] items-center justify-center"><Caret className="text-[#6a717d]" /></span>;
}

function NavBar() {
  return (
    <div className="absolute top-[75px] right-px flex h-[104px] w-[17px] flex-col rounded-[3px] border border-[#646b78] bg-[#8b919d] pt-[10px]">
      <span className="absolute top-px right-px size-[4px] rounded-full border border-[#5c6370]" />
      <button aria-label="Steering wheel" className="flex justify-center">
        <svg viewBox="0 0 16 16" className="size-[12px]" fill="none">
          <path d="M8 1h7v7a7 7 0 1 1-7-7z" fill="#c5c9cf" stroke="#dfe2e6" />
          <circle cx="8" cy="8" r="4" stroke="#7a818e" strokeWidth="1.4" />
          <circle cx="8" cy="8" r="1.8" fill="#8b919d" />
        </svg>
      </button>
      <span className="mb-px flex h-[8px] items-end justify-center border-b border-[#737a87] pb-px"><Caret className="text-[#6a717d]" /></span>
      <NavButton label="Pan"><path d="M4 14L1.5 8l2 1V3M6 8V2M9 8V2M12 8V4v7l-2 4H5" fill="#c5c9cf" /></NavButton>
      <NavButton label="Zoom"><circle cx="7" cy="6" r="4.5" fill="#c5c9cf" /><path d="M10 10l5 5" stroke="#5f6672" strokeWidth="2.4" /></NavButton>
      <NavCaret />
      <NavButton label="Orbit"><path d="M8 1l2.5 3h-5zM8 15l2.5-3h-5zM1 8l3-2.500v5zM15 8l-3-2.500v5z" fill="#b4b9c1" strokeWidth="0.8" /><circle cx="8" cy="8" r="3.2" strokeWidth="1.4" /></NavButton>
      <NavCaret />
      <NavButton label="Look at"><rect x="1.5" y="6" width="13" height="8" rx="1" /><path d="M4 6l1.5-3h5L12 6M2 10h12" strokeWidth="1.4" /></NavButton>
      <span className="absolute right-px bottom-px size-[4px] rounded-full border border-[#5c6370]" />
    </div>
  );
}

function ModelView() {
  return (
    <main className="flex min-w-0 flex-1 flex-col border-l border-[#d4d6da]">
      <div className="relative min-h-0 flex-1 overflow-hidden bg-[linear-gradient(to_bottom,#7686a2_0%,#8794ae_20%,#98a2b8_38%,#a0a8bb_52%,#98a0b0_66%,#a3a7b2_71%,#b4b7bd_80%,#c3c4c7_91%,#cbccce_100%)]">
        <div className="absolute inset-0 bg-[linear-gradient(to_right,rgba(42,50,64,.68)_0%,rgba(42,50,64,.40)_12%,rgba(42,50,64,.13)_27%,rgba(42,50,64,0)_42%,rgba(42,50,64,0)_62%,rgba(42,50,64,.14)_76%,rgba(42,50,64,.42)_89%,rgba(42,50,64,.72)_100%)] mask-[linear-gradient(to_bottom,#000_0%,rgba(0,0,0,.72)_35%,rgba(0,0,0,.56)_58%,rgba(0,0,0,.2)_74%,rgba(0,0,0,.05)_100%)]" />
        <Sketch />
        <div className="absolute top-[3px] right-0 flex">
          <button aria-label="Minimize view" className="flex w-[10px] justify-center"><Icon name="min" className="size-[6px]" /></button>
          <button aria-label="Restore view" className="flex w-[11px] justify-center"><Icon name="restore" className="size-[7px]" /></button>
          <button aria-label="Close view" className="flex w-[8px] justify-center"><Icon name="close" className="size-[6px]" /></button>
        </div>
        <NavBar />
        <button aria-label="Share" className="absolute right-0 bottom-[16px] flex size-[24px] items-center justify-center bg-[#f7f8fa]">
          <svg viewBox="0 0 16 16" className="size-[17px]">
            <path d="M8 0l7 4v8l-7 4-7-4V4z" fill="#4f9fe6" />
            <path d="M8 0l7 4-7 4-7-4z" fill="#6db7f2" />
            <path d="M10.500 5.500L6 8l4.500 2.500" fill="none" stroke="#fff" strokeWidth="1" />
            <circle cx="10.5" cy="5.5" r="1.3" fill="#fff" /><circle cx="6" cy="8" r="1.4" fill="#fff" /><circle cx="10.5" cy="10.5" r="1.3" fill="#fff" />
          </svg>
        </button>
      </div>
      <footer className="flex h-[13px] items-stretch border-t border-[#dcdcdc] bg-[#5b5b5b] text-[6px] leading-[12px] text-[#d0d0d0]">
        {[['cascade', 'Cascade'], ['grid4', 'Arrange'], ['rows', 'Tile horizontally'], ['cols', 'Tile vertically'], ['up', 'Show tabs']].map(([icon, label]) => (
          <button key={label} aria-label={label} className="flex w-[12px] items-center justify-center">
            <Icon name={icon} />
          </button>
        ))}
        <button className="ml-[2px] w-[37px] border-x border-[#474747]">My Home</button>
        <div className="flex w-[48px] items-center justify-around bg-[#f4f4f4] text-[#4a4a4a]">
          <button>square.iam</button>
          <button aria-label="Close square.iam" className="flex">
            <svg viewBox="0 0 8 8" className="size-[5px]"><path d="M1 1l6 6M7 1L1 7" stroke="#222" strokeWidth="1.8" /></svg>
          </button>
        </div>
      </footer>
    </main>
  );
}

export default function App() {
  return (
    <div className="flex h-screen flex-col overflow-hidden bg-[#f1f1f3] pr-[2px] font-['Open_Sans','Noto_Sans',sans-serif]">
      <TitleBar />
      <TabRow />
      <Ribbon />
      <div className="flex min-h-0 flex-1">
        <ModelTree />
        <ModelView />
      </div>
    </div>
  );
}
